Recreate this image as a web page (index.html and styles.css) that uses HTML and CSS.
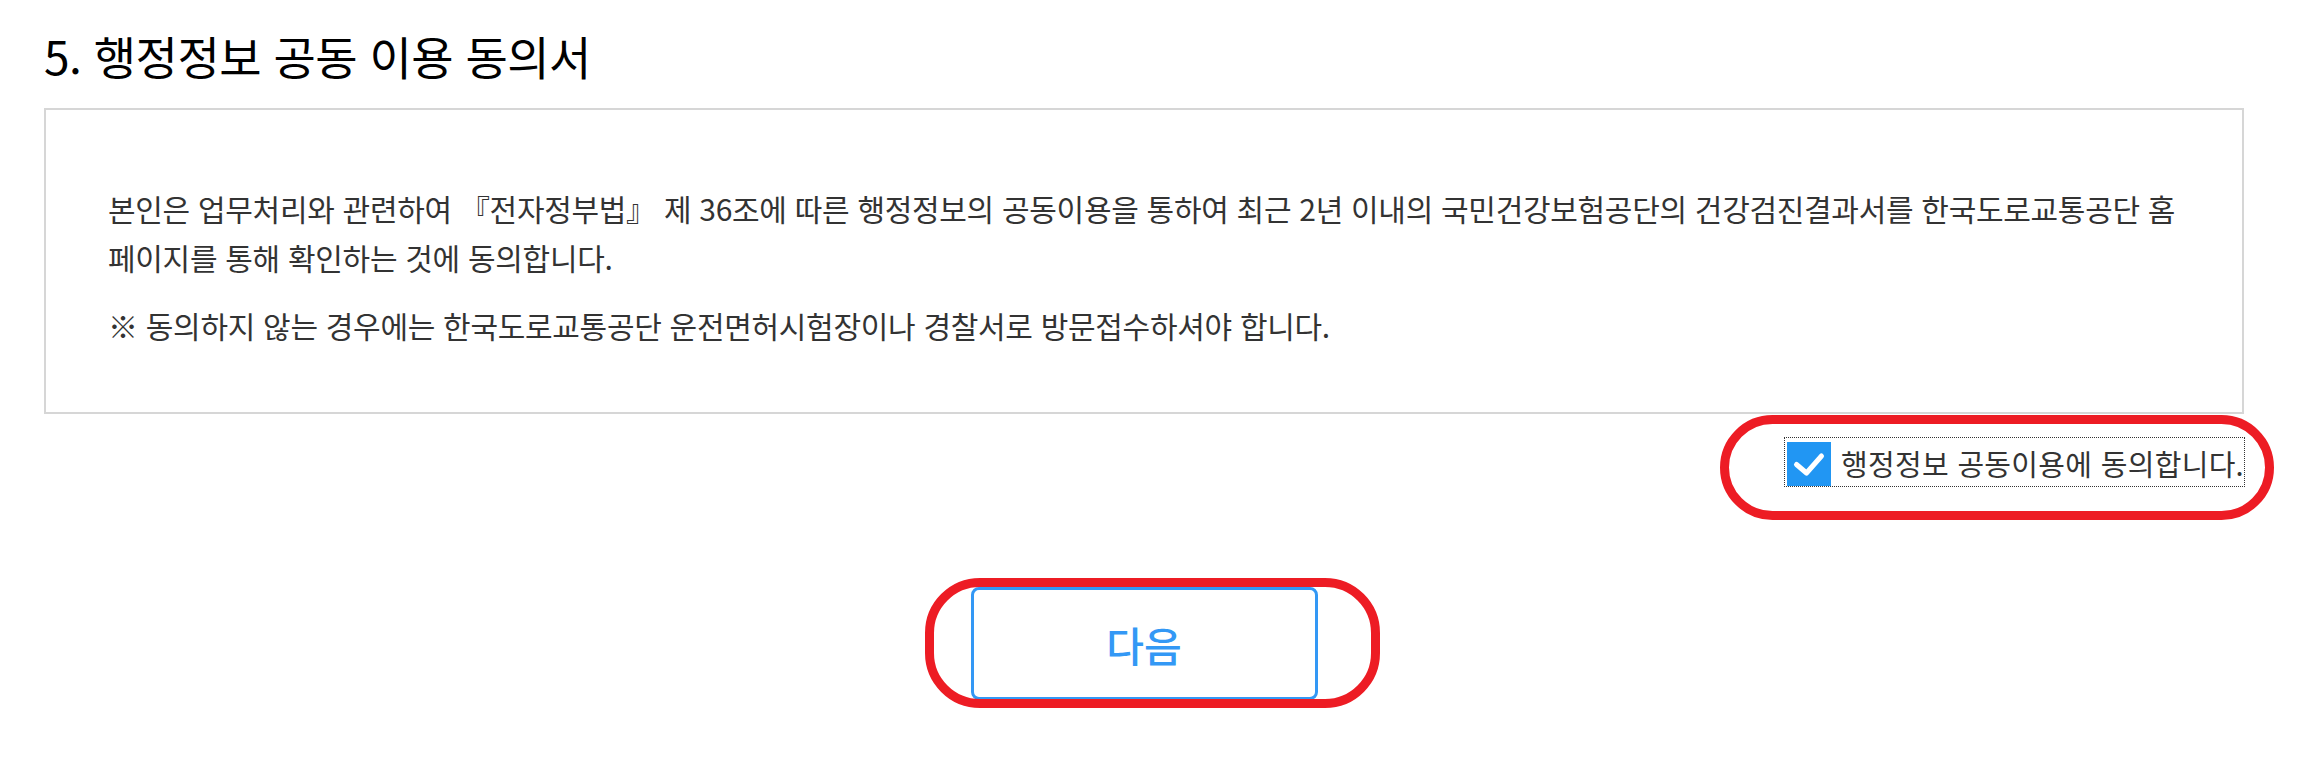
FILE: index.html
```html
<!DOCTYPE html>
<html lang="ko">
<head>
<meta charset="utf-8">
<title>행정정보 공동 이용 동의서</title>
<link rel="stylesheet" href="styles.css">
</head>
<body>
<div class="page">
  <h2 class="section-title">5. 행정정보 공동 이용 동의서</h2>
  <div class="consent-box">
    <p class="consent-text">본인은 업무처리와 관련하여 『전자정부법』 제 36조에 따른 행정정보의 공동이용을 통하여 최근 2년 이내의 국민건강보험공단의 건강검진결과서를 한국도로교통공단 홈<br>페이지를 통해 확인하는 것에 동의합니다.</p>
    <p class="consent-text note">※ 동의하지 않는 경우에는 한국도로교통공단 운전면허시험장이나 경찰서로 방문접수하셔야 합니다.</p>
  </div>
  <div class="agree-row">
    <label class="agree-label">
      <span class="check-box">
        <svg width="44" height="44" viewBox="0 0 44 44"><path d="M9.5 22.5 L19.5 31 L34.5 14" fill="none" stroke="#fff" stroke-width="5" stroke-linecap="round" stroke-linejoin="round"/></svg>
      </span>
      <span class="agree-text">행정정보 공동이용에 동의합니다.</span>
    </label>
  </div>
  <div class="actions">
    <button class="next-btn" type="button">다음</button>
  </div>
  <div class="mark mark-check"></div>
  <div class="mark mark-btn"></div>
</div>
</body>
</html>
```

FILE: styles.css
```css
html, body {
  margin: 0;
  padding: 0;
  background: #fff;
}

body {
  font-family: "Noto Sans CJK KR", "Noto Sans", sans-serif;
  color: #333;
}

.page {
  position: relative;
  width: 2200px;
  height: 757px;
  margin-left: 44px;
  box-sizing: border-box;
  padding-top: 28px;
}

.section-title {
  margin: 0;
  font-size: 46px;
  line-height: 54px;
  font-weight: 400;
  letter-spacing: -0.5px;
  color: #000;
}

.consent-box {
  margin-top: 26px;
  height: 306px;
  box-sizing: border-box;
  border: 2px solid #d6d6d6;
  padding: 74px 40px 0 62px;
}

.consent-text {
  margin: 0;
  font-size: 30px;
  line-height: 49px;
  letter-spacing: -0.3px;
  color: #333;
  white-space: nowrap;
}

.consent-text.note {
  margin-top: 19px;
}

.agree-row {
  display: flex;
  justify-content: flex-end;
  margin-top: 24px;
}

.agree-label {
  display: flex;
  align-items: flex-end;
  height: 48px;
  padding-left: 2px;
  outline: 1px dotted #333;
  outline-offset: 0;
}

.check-box {
  display: block;
  width: 44px;
  height: 44px;
  background: #2196f3;
}

.check-box svg {
  display: block;
}

.agree-text {
  margin-left: 10px;
  margin-bottom: 3px;
  font-size: 29px;
  line-height: 40px;
  letter-spacing: 0.3px;
  color: #333;
  white-space: nowrap;
}

.actions {
  display: flex;
  justify-content: center;
  margin-top: 101px;
}

.next-btn {
  width: 347px;
  height: 113px;
  box-sizing: border-box;
  border: 3px solid #3398f5;
  border-radius: 8px;
  background: #fff;
  color: #3398f5;
  font-family: "Noto Sans CJK KR", "Noto Sans", sans-serif;
  font-size: 41px;
  font-weight: 500;
  padding: 0;
}

.mark {
  position: absolute;
  box-sizing: border-box;
  border: 9px solid #ed1c24;
  pointer-events: none;
}

.mark-check {
  left: 1676px;
  top: 415px;
  width: 554px;
  height: 105px;
  border-radius: 53px;
}

.mark-btn {
  left: 881px;
  top: 578px;
  width: 455px;
  height: 130px;
  border-radius: 55px;
}
```
